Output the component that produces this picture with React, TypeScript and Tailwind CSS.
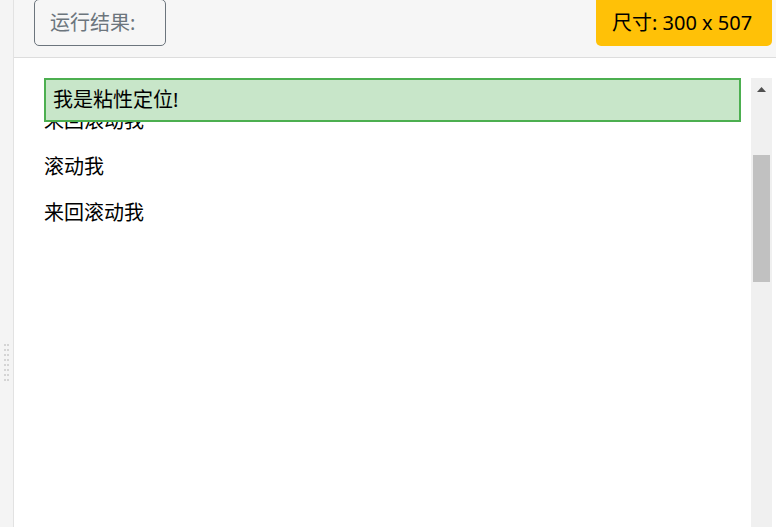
const font = { fontFamily: '"Noto Sans", "Noto Sans CJK SC", sans-serif' };

function DragHandle() {
  return (
    <div className="grid w-[5px] grid-cols-[2px_2px] gap-x-px gap-y-[3px]">
      {Array.from({ length: 16 }).map((_, i) => (
        <span key={i} className="h-[2px] w-[2px] bg-[#d4d4d4]" />
      ))}
    </div>
  );
}

function Scrollbar() {
  return (
    <div className="flex w-[21px] shrink-0 flex-col items-center bg-[#f0f0f0]">
      <div className="flex h-[22px] items-center justify-center">
        <svg width="9" height="5" viewBox="0 0 9 5">
          <polygon points="0,5 4.5,0 9,5" fill="#505050" />
        </svg>
      </div>
      <div className="mt-[55px] h-[127px] w-[17px] bg-[#c1c1c1]" />
    </div>
  );
}

export default function App() {
  const rows = ["来回滚动我", "滚动我", "来回滚动我"];
  return (
    <div className="flex h-[527px] w-[776px] overflow-hidden bg-white text-[20px]" style={font}>
      <div className="flex w-[14px] shrink-0 items-start border-r border-[#e2e2e2] bg-[#f4f4f4] pl-[4px] pt-[344px]">
        <DragHandle />
      </div>
      <div className="flex min-w-0 flex-1 flex-col">
        <div className="flex h-[58px] shrink-0 items-start justify-between border-b border-[#dddddd] bg-[#f6f6f6] pl-[20px] pr-[4px]">
          <button className="-mt-px flex h-[47px] w-[132px] items-center whitespace-nowrap rounded-[5px] border border-[#6c757d] px-[15px] text-[#6c757d]">
            运行结果:
          </button>
          <div className="flex h-[46px] w-[176px] items-center whitespace-nowrap rounded-b-[5px] bg-[#ffc107] px-[16px] text-black">
            尺寸: 300 x 507
          </div>
        </div>
        <div className="flex flex-1 pl-[30px] pr-[4px] pt-[20px]">
          <div className="relative min-w-0 flex-1 overflow-hidden">
            <div className="absolute left-0 right-[10px] top-0 z-10 flex h-[44px] items-center border-2 border-[#4caf50] bg-[#c8e6c9] pl-[7px] text-black">
              我是粘性定位!
            </div>
            <div className="pt-[29px] text-black">
              {rows.map((r, i) => (
                <p key={i} className="mb-[18px] leading-[28px]">
                  {r}
                </p>
              ))}
            </div>
          </div>
          <Scrollbar />
        </div>
      </div>
    </div>
  );
}
